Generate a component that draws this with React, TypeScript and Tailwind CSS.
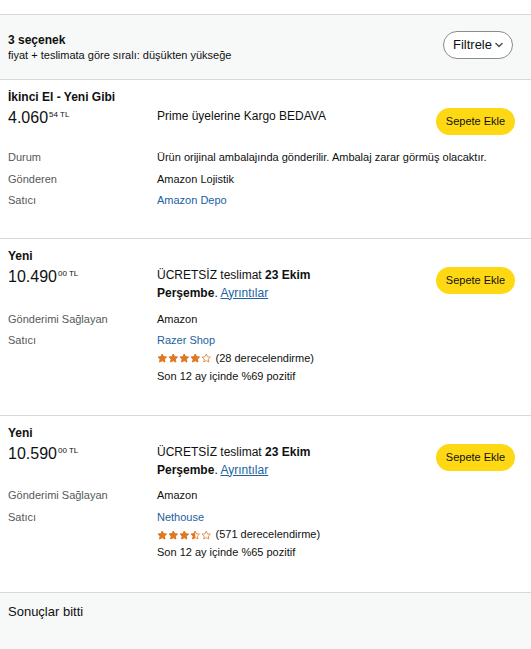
import React from 'react';

type Offer = {
  condition: string;
  price: string;
  cents: string;
  rows: { label: string; value: React.ReactNode }[];
  delivery?: 'prime' | 'free';
  rowsMt: string;
  pb: string;
};

function Star({ fill }: { fill: 'full' | 'half' | 'empty' }) {
  const d = 'M12 2.5l2.9 6.1 6.6.8-4.9 4.6 1.3 6.6L12 17.3l-5.9 3.3 1.3-6.6-4.9-4.6 6.6-.8z';
  return (
    <svg width="10.5" height="10.5" viewBox="0 0 24 24">
      <defs>
        <clipPath id="half">
          <rect x="0" y="0" width="12" height="24" />
        </clipPath>
      </defs>
      <path d={d} fill="none" stroke="#de7921" strokeWidth="1.8" strokeLinejoin="round" />
      {fill === 'full' && <path d={d} fill="#de7921" stroke="#de7921" strokeWidth="1.8" strokeLinejoin="round" />}
      {fill === 'half' && (
        <path d={d} fill="#de7921" stroke="#de7921" strokeWidth="1.8" strokeLinejoin="round" clipPath="url(#half)" />
      )}
    </svg>
  );
}

function Seller({ name, stars, count, pct }: { name: string; stars: ('full' | 'half' | 'empty')[]; count: string; pct: string }) {
  return (
    <div>
      <div className="leading-[21.5px] text-[#2162a1]">{name}</div>
      <div className="h-[14px] flex items-center gap-[4px]">
        <div className="flex gap-[0.5px]">
          {stars.map((s, i) => (
            <Star key={i} fill={s} />
          ))}
        </div>
        <span>({count} derecelendirme)</span>
      </div>
      <div className="leading-[20px]">Son 12 ay içinde %{pct} pozitif</div>
    </div>
  );
}

const offers: Offer[] = [
  {
    condition: 'İkinci El - Yeni Gibi',
    price: '4.060',
    cents: '54',
    delivery: 'prime',
    rowsMt: 'mt-[12px]',
    pb: 'pb-[26px]',
    rows: [
      { label: 'Durum', value: 'Ürün orijinal ambalajında gönderilir. Ambalaj zarar görmüş olacaktır.' },
      { label: 'Gönderen', value: 'Amazon Lojistik' },
      { label: 'Satıcı', value: <span className="text-[#2162a1]">Amazon Depo</span> },
    ],
  },
  {
    condition: 'Yeni',
    price: '10.490',
    cents: '00',
    delivery: 'free',
    rowsMt: 'mt-[7px]',
    pb: 'pb-[29px]',
    rows: [
      { label: 'Gönderimi Sağlayan', value: 'Amazon' },
      {
        label: 'Satıcı',
        value: <Seller name="Razer Shop" stars={['full', 'full', 'full', 'full', 'empty']} count="28" pct="69" />,
      },
    ],
  },
  {
    condition: 'Yeni',
    price: '10.590',
    cents: '00',
    delivery: 'free',
    rowsMt: 'mt-[6.5px]',
    pb: 'pb-[30px]',
    rows: [
      { label: 'Gönderimi Sağlayan', value: 'Amazon' },
      {
        label: 'Satıcı',
        value: <Seller name="Nethouse" stars={['full', 'full', 'full', 'half', 'empty']} count="571" pct="65" />,
      },
    ],
  },
];

export default function App() {
  return (
    <div
      className="w-[531px] min-h-[649px] flex flex-col bg-white text-[#0f1111]"
      style={{ fontFamily: '"Liberation Sans", Arial, sans-serif' }}
    >
      <div className="h-[14px] bg-white" />

      {/* Header */}
      <div className="h-[66px] bg-[#f7f8f8] border-y border-[#d5d9d9] pl-2 pr-[18px] flex items-center justify-between">
        <div>
          <div className="text-[12px] font-bold leading-4">3 seçenek</div>
          <div className="text-[11px] leading-[14px]">fiyat + teslimata göre sıralı: düşükten yükseğe</div>
        </div>
        <button className="h-[28px] w-[70px] mb-[4px] rounded-full border border-[#888c8c] bg-white flex items-center justify-center gap-[3px] text-[13px]">
          Filtrele
          <svg width="8" height="6" viewBox="0 0 8 6">
            <path d="M1 1.5l3 3 3-3" fill="none" stroke="#565959" strokeWidth="1.6" strokeLinecap="round" strokeLinejoin="round" />
          </svg>
        </button>
      </div>

      {offers.map((o, i) => (
        <div key={i} className={`border-b border-[#d5d9d9] pl-2 pr-4 pt-[9px] ${o.pb}`}>
          <div className="text-[12px] font-bold leading-4">{o.condition}</div>
          <div className="flex items-start">
            <div className="w-[149px] flex items-start">
              <span className="text-[16px] leading-[26px]">{o.price}</span>
              <span className="text-[8px] leading-none mt-[6px] ml-[1px]">{o.cents} TL</span>
            </div>
            <div className="w-[190px] mt-[2px] text-[12px] leading-[18px]">
              {o.delivery === 'prime' ? (
                'Prime üyelerine Kargo BEDAVA'
              ) : (
                <>
                  ÜCRETSİZ teslimat <b>23 Ekim Perşembe</b>.{' '}
                  <span className="text-[#2162a1] underline">Ayrıntılar</span>
                </>
              )}
            </div>
            <button className="ml-auto mt-[3px] h-[27px] w-[79px] rounded-full bg-[#ffd814] text-[11px]">
              Sepete Ekle
            </button>
          </div>
          <div className={`${o.rowsMt} grid grid-cols-[149px_1fr] text-[11px]`}>
            {o.rows.map((r, j) => (
              <React.Fragment key={j}>
                <div className="leading-[21.5px] text-[#565959]">{r.label}</div>
                <div className="leading-[21.5px]">{r.value}</div>
              </React.Fragment>
            ))}
          </div>
        </div>
      ))}

      {/* Footer */}
      <div className="flex-1 bg-[#f7f8f8] pl-2 pt-[10px]">
        <div className="text-[13px] leading-[18px]">Sonuçlar bitti</div>
      </div>
    </div>
  );
}
